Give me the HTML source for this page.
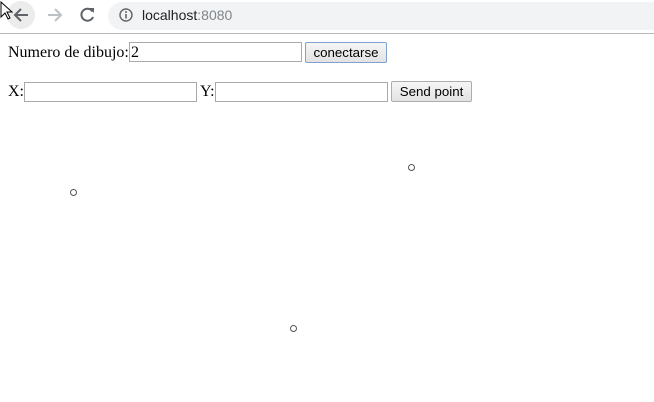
<!DOCTYPE html>
<html><head><style>
body{margin:0;width:654px;height:402px;overflow:hidden;background:#fff;position:relative;font-family:"Liberation Serif",serif;font-size:16px;color:#000}
.bar{position:absolute;left:0;top:0;width:654px;height:33px;background:#fff;border-bottom:1px solid #b8b8b8}
.addr{position:absolute;left:108px;top:2px;width:560px;height:28px;border-radius:14px;background:#f1f3f4}
.url{position:absolute;left:142px;top:7px;font-family:"Liberation Sans",sans-serif;font-size:14px;color:#202124}
.url span{color:#80868b}
.a{position:absolute}
.inp{position:absolute;height:18px;border:1px solid #a9a9a9;background:#fff;box-sizing:content-box}
.btn{position:absolute;box-sizing:border-box;border:1px solid #adadad;background:linear-gradient(#f6f6f6,#e3e3e3);font-family:"Liberation Sans",sans-serif;font-size:13.3px;text-align:center;line-height:19px;border-radius:2px}
.pt{position:absolute;width:5px;height:5px;border:1px solid #555;border-radius:50%}
</style></head><body>
<div class="bar">
<div class="a" style="left:7px;top:1px;width:28px;height:28px;border-radius:50%;background:#ececec"></div>
<svg class="a" style="left:0;top:0" width="110" height="33">
<path d="M28 15H15M21 9l-6 6 6 6" stroke="#5f6368" stroke-width="2" fill="none"/>
<path d="M61 15H48M55 9l6 6-6 6" stroke="#bdc1c6" stroke-width="2" fill="none"/>
<path d="M92.5 11.5A6 6 0 1 0 93 17" stroke="#5f6368" stroke-width="2" fill="none"/><path d="M89 8h5v5z" fill="#5f6368"/>
<path d="M1 2v15l4-4 3 6 2-1-3-6h5z" fill="#fff" stroke="#000" stroke-width="1"/>
</svg>
<div class="addr"></div>
<svg class="a" style="left:119px;top:8px" width="14" height="14"><circle cx="7" cy="7" r="6" stroke="#5f6368" stroke-width="1.4" fill="none"/><path d="M7 6v4.5" stroke="#5f6368" stroke-width="1.6"/><circle cx="7" cy="4" r="1" fill="#5f6368"/></svg>
<div class="url">localhost<span>:8080</span></div>
</div>
<div class="a" style="left:8px;top:44px">Numero de dibujo:</div>
<div class="inp" style="left:129px;top:42px;width:171px;"><span style="position:absolute;left:1px;top:1px">2</span></div>
<div class="btn" style="left:305px;top:42px;width:82px;height:21px;border-color:#7da2ce">conectarse</div>
<div class="a" style="left:8px;top:83px">X:</div>
<div class="inp" style="left:24px;top:82px;width:171px"></div>
<div class="a" style="left:200px;top:83px">Y:</div>
<div class="inp" style="left:215px;top:82px;width:171px"></div>
<div class="btn" style="left:391px;top:81px;width:81px;height:21px">Send point</div>
<div class="pt" style="left:70px;top:189px"></div>
<div class="pt" style="left:408px;top:164px"></div>
<div class="pt" style="left:290px;top:325px"></div>
</body></html>
